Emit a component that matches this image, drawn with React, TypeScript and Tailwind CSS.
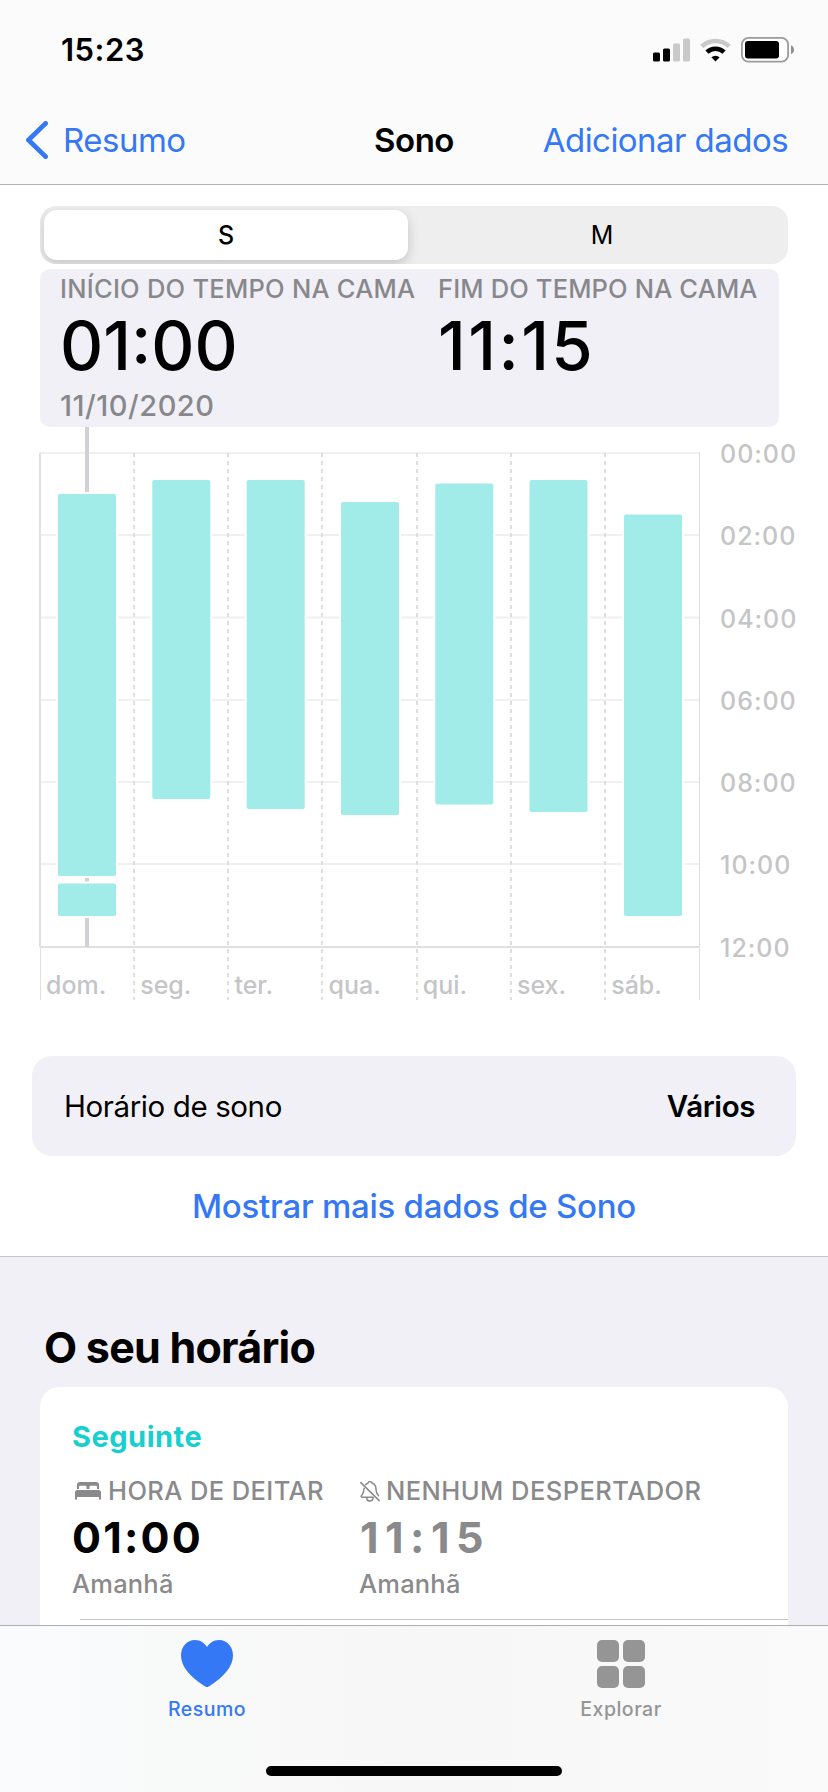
import React from "react";
import { clsx } from "clsx";

const hours = ["00:00", "02:00", "04:00", "06:00", "08:00", "10:00", "12:00"];
const hourLines = [453, 535, 617.5, 700, 782, 864, 947];

// each night holds its in-bed segments as [top, bottom]
const nights = [
    { day: "dom.", x: 58, segments: [[494, 876], [883.5, 916]] },
    { day: "seg.", x: 152.3, segments: [[480, 799]] },
    { day: "ter.", x: 246.7, segments: [[480, 809]] },
    { day: "qua.", x: 341, segments: [[502, 815]] },
    { day: "qui.", x: 435.3, segments: [[483.5, 804.5]] },
    { day: "sex.", x: 529.5, segments: [[480, 812]] },
    { day: "sáb.", x: 624, segments: [[514.5, 916]] },
];

function StatusBar() {
    return (<div className="h-[99px] pl-[61px] pr-[34px] flex items-center justify-between">
        <div className="text-[31px] leading-none font-semibold tracking-[0.5px]">15:23</div>
        <div className="flex items-center gap-[10px]">
            <svg width="37" height="24" viewBox="0 0 37 24">
                <rect x="0" y="14.5" width="7" height="9" rx="1.5" fill="#000" />
                <rect x="10" y="10.5" width="7" height="13" rx="1.5" fill="#000" />
                <rect x="20" y="5.5" width="7" height="18" rx="1.5" fill="#c9c9c9" />
                <rect x="30" y="0.5" width="7" height="23" rx="1.5" fill="#c9c9c9" />
            </svg>
            <svg width="31" height="24" viewBox="0 0 31 24" fill="none">
                <path d="M1.8 8.4a20 20 0 0 1 27.4 0" stroke="#c9c9c9" strokeWidth="4.6" />
                <path d="M7 14.2a12.2 12.2 0 0 1 17 0" stroke="#000" strokeWidth="4.6" />
                <path d="M15.5 23.5l-4.1-4.2a6 6 0 0 1 8.2 0z" fill="#000" />
            </svg>
            <svg width="53" height="26" viewBox="0 0 53 26">
                <rect x="0.9" y="0.9" width="46.2" height="23.7" rx="6.5" fill="#fff" stroke="#9b9b9b" strokeWidth="1.8" />
                <rect x="4" y="4" width="34" height="17.5" rx="3" fill="#000" />
                <path d="M50 8.3c1.8.8 3 2.5 3 4.5s-1.2 3.7-3 4.5z" fill="#8f8f8f" />
            </svg>
        </div>
    </div>);
}

function NavBar() {
    return (<div className="h-[82px] px-[26px] grid grid-cols-[340px_96px_340px] items-center text-[33px] leading-[80px]">
        <a className="flex items-center gap-[15px] tracking-[-0.5px] text-[#3478f6]">
            <svg width="22" height="38" viewBox="0 0 22 38" fill="none">
                <path d="M19.6 2.4L2.5 19l17.1 16.6" stroke="#3478f6" strokeWidth="4.8" strokeLinecap="round" strokeLinejoin="round" />
            </svg>
            Resumo
        </a>
        <h1 className="text-center font-semibold tracking-[-0.5px]">Sono</h1>
        <a className="pr-[14px] text-right whitespace-nowrap tracking-[-0.55px] text-[#3478f6]">Adicionar dados</a>
    </div>);
}

function RangeSwitch() {
    return (<div className="mx-10 h-[58px] p-1 flex rounded-[16px] bg-[#eeeeee] overflow-hidden text-[25px] leading-[50px] text-center">
        <div className="w-[364px] rounded-[13px] bg-white font-medium shadow-[0_4px_12px_rgba(0,0,0,0.18)]">S</div>
        <div className="flex-1 pl-3">M</div>
    </div>);
}

function BedTimes() {
    return (<div className="ml-10 mt-[5px] w-[739px] h-[158px] pl-[20px] pt-[4px] flex rounded-[10px] bg-[#f1f0f6] text-[#88888c] font-medium">
        <div className="w-[378px]">
            <div className="text-[25.5px] leading-[32px] font-[540] tracking-[0.25px] whitespace-nowrap">INÍCIO DO TEMPO NA CAMA</div>
            <div className="text-[67px] leading-[82px] text-black">01:00</div>
            <div className="text-[29px] leading-[37px] font-[540] tracking-[0.5px]">11/10/2020</div>
        </div>
        <div>
            <div className="text-[25.5px] leading-[32px] font-[540] tracking-[0.15px] whitespace-nowrap">FIM DO TEMPO NA CAMA</div>
            <div className="text-[67px] leading-[82px] tracking-[2.4px] text-black">11:15</div>
        </div>
    </div>);
}

function SleepChart() {
    return (<svg className="block" width="828" height="573" viewBox="0 427 828 573">
        {hourLines.map((y, i) => (
            <line key={y} x1="40" x2="700" y1={y} y2={y} stroke={i === 6 ? "#e0e0e1" : "#f0f0f0"} strokeWidth="2" />
        ))}
        <line x1="40" x2="40" y1="453" y2="947" stroke="#e0e0e1" strokeWidth="2" />
        <line x1="40.5" x2="40.5" y1="947" y2="1000" stroke="#e0e0e1" />
        <line x1="699.5" x2="699.5" y1="453" y2="1000" stroke="#dededf" />
        {[134, 228, 322, 417, 511, 605].map((x) => (
            <line key={x} x1={x} x2={x} y1="453" y2="1000" stroke="#dededf" strokeWidth="2" strokeDasharray="4 4" />
        ))}
        <line x1="87" x2="87" y1="427" y2="947" stroke="#d1d1d6" strokeWidth="4" />
        {nights.map((night) => night.segments.map(([top, bottom]) => (
            <g key={night.day + top}>
                <rect x={night.x - 2} y={top - 2} width="62" height={bottom - top + 4} fill="#fff" />
                <rect x={night.x} y={top} width="58" height={bottom - top} rx="2" fill="#a1ebe8" />
            </g>
        )))}
        <g className="text-[25px] font-medium" fill="#c5c5c7">
            {nights.map((night, i) => (
                <text key={night.day} x={46 + i * 94.2} y="994">{night.day}</text>
            ))}
            {hours.map((hour, i) => (
                <text key={hour} className="tracking-[1px]" x="720" y={hourLines[i] + 10}>{hour}</text>
            ))}
        </g>
    </svg>);
}

function BedIcon() {
    return (<svg width="26" height="18" viewBox="0 0 26 18" fill="#8a8a8c">
        <path d="M2 7V3a3 3 0 0 1 3-3h16a3 3 0 0 1 3 3v4h-2V4.8a1 1 0 0 0-1-1h-5.5a1 1 0 0 0-1 1V7h-3V4.8a1 1 0 0 0-1-1H5a1 1 0 0 0-1 1V7z" />
        <path d="M0 10.5a2.5 2.5 0 0 1 2.5-2.5h21a2.5 2.5 0 0 1 2.5 2.5V17.5h-2V15H2v2.5H0z" />
    </svg>);
}

function BellOffIcon() {
    return (<svg width="20" height="21" viewBox="0 0 20 21" fill="none" stroke="#8a8a8c" strokeWidth="1.5" strokeLinecap="round" strokeLinejoin="round">
        <path d="M0.8 1.6L19.2 19.6" />
        <path d="M5.6 3.8C6.6 2.6 7.6 2.2 8 2c.2-.9 1-1.4 2-1.4s1.8.5 2 1.4c2.6 1 4 3.2 4 6.2 0 3.2.9 4.6 2.4 6.4" />
        <path d="M4.1 7.2c-.2 3.8-.6 5.2-2.5 7.2-.8.9-.4 1.8.6 1.8h11" />
        <path d="M6.8 17.4c.2 1.7 1.5 2.7 3.1 2.7s2.8-1 3.1-2.7" />
    </svg>);
}

function ScheduleCard() {
    return (<div className="mx-10 pt-[28px] flex-1 rounded-t-[20px] bg-white text-[#8a8a8c] font-medium">
        <div className="pl-[32px] text-[29px] leading-[44px] font-bold tracking-[0.5px] text-[#17cfcf]">Seguinte</div>
        <div className="pl-[32px] mt-[14px] grid grid-cols-[287px_1fr]">
            <div>
                <div className="pl-[3px] flex items-center gap-[7px] text-[25.5px] leading-[36px] font-[540] tracking-[0.4px] whitespace-nowrap"><BedIcon />HORA DE DEITAR</div>
                <div className="text-[43px] leading-[56px] font-bold tracking-[2.2px] text-black">01:00</div>
                <div className="text-[25.5px] leading-[38px] font-[540] tracking-[0.2px]">Amanhã</div>
            </div>
            <div>
                <div className="pl-[1px] flex items-center gap-[6px] text-[25.5px] leading-[36px] font-[540] tracking-[0.45px] whitespace-nowrap"><BellOffIcon />NENHUM DESPERTADOR</div>
                <div className="pl-[1px] text-[43px] leading-[56px] font-bold tracking-[6.5px]">11:15</div>
                <div className="text-[25.5px] leading-[38px] font-[540] tracking-[0.2px]">Amanhã</div>
            </div>
        </div>
        <div className="ml-10 mt-[16px] h-px bg-[#c6c6c8]" />
    </div>);
}

function TabItem({ label, active, children }: { label: string; active?: boolean; children: React.ReactNode }) {
    return (<div className={clsx("flex-1 flex flex-col items-center text-[19.5px] leading-[24px] font-medium tracking-[0.5px]", active ? "text-[#3478f6]" : "text-[#959595]")}>
        <div className="h-[48px]">{children}</div>
        <div className="mt-[9px]">{label}</div>
    </div>);
}

function TabBar() {
    return (<div className="h-[167px] border-t border-[#aeaeb2] bg-linear-to-r from-[#fafbfc] via-[#f7f7f7] to-[#fafafa] flex flex-col">
        <div className="h-[140px] pt-[14px] flex">
            <TabItem label="Resumo" active>
                <svg width="52" height="47" viewBox="0 0 52 47" fill="#3478f6">
                    <path d="M26 47c-.9 0-2-.7-3-1.3C9 36.5 0 26.5 0 15.5 0 6.500 6 0 14 0c5.200 0 9.500 2.800 12 7 2.500-4.200 6.800-7 12-7 8 0 14 6.500 14 15.500 0 11-9 21-23 30.200-1 .6-2.100 1.300-3 1.300z" />
                </svg>
            </TabItem>
            <TabItem label="Explorar">
                <div className="grid grid-cols-2 gap-1">
                    {[0, 1, 2, 3].map((n) => <div key={n} className="size-[22px] rounded-[5px] bg-[#959595]" />)}
                </div>
            </TabItem>
        </div>
        <div className="mx-auto w-[296px] h-[10px] rounded-full bg-black" />
    </div>);
}

function App() {
    return (<div className="w-[828px] h-[1792px] flex flex-col overflow-hidden bg-[#f1f0f6] text-black font-['Inter','Liberation_Sans',sans-serif]">
        <header className="h-[185px] border-b border-[#b3b3b4] bg-[#fbfbfb]">
            <StatusBar />
            <NavBar />
        </header>
        <section className="h-[1072px] pt-[21px] border-b border-[#c6c6c8] bg-white">
            <RangeSwitch />
            <BedTimes />
            <SleepChart />
            <div className="mx-8 mt-[56px] h-[100px] pl-[32px] pr-[41px] flex items-center justify-between rounded-[20px] bg-[#f1f0f6] text-[29.5px]">
                <span className="tracking-[-0.4px]">Horário de sono</span>
                <span className="font-semibold tracking-[-0.4px]">Vários</span>
            </div>
            <a className="block h-[100px] text-center text-[33px] leading-[100px] font-[450] tracking-[-0.25px] text-[#3478f6]">Mostrar mais dados de Sono</a>
        </section>
        <section className="flex-1 pt-[60px] flex flex-col">
            <h2 className="pl-[44px] h-[70px] text-[43px] leading-[60px] font-bold tracking-[-0.75px]">O seu horário</h2>
            <ScheduleCard />
        </section>
        <TabBar />
    </div>);
}

export default App;
